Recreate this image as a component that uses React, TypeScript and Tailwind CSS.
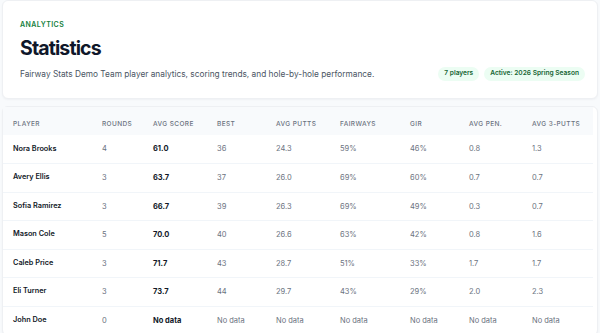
import React from "react";

type Row = {
  name: string;
  rounds: string;
  avg: string;
  best: string;
  putts: string;
  fw: string;
  gir: string;
  pen: string;
  three: string;
};

const rows: Row[] = [
  { name: "Nora Brooks", rounds: "4", avg: "61.0", best: "36", putts: "24.3", fw: "59%", gir: "46%", pen: "0.8", three: "1.3" },
  { name: "Avery Ellis", rounds: "3", avg: "63.7", best: "37", putts: "26.0", fw: "69%", gir: "60%", pen: "0.7", three: "0.7" },
  { name: "Sofia Ramirez", rounds: "3", avg: "66.7", best: "39", putts: "26.3", fw: "69%", gir: "49%", pen: "0.3", three: "0.7" },
  { name: "Mason Cole", rounds: "5", avg: "70.0", best: "40", putts: "26.6", fw: "63%", gir: "42%", pen: "0.8", three: "1.6" },
  { name: "Caleb Price", rounds: "3", avg: "71.7", best: "43", putts: "28.7", fw: "51%", gir: "33%", pen: "1.7", three: "1.7" },
  { name: "Eli Turner", rounds: "3", avg: "73.7", best: "44", putts: "29.7", fw: "43%", gir: "29%", pen: "2.0", three: "2.3" },
  { name: "John Doe", rounds: "0", avg: "No data", best: "No data", putts: "No data", fw: "No data", gir: "No data", pen: "No data", three: "No data" },
];

const headers = ["Player", "Rounds", "Avg Score", "Best", "Avg Putts", "Fairways", "GIR", "Avg Pen.", "Avg 3-Putts"];
const widths = ["w-[89px]", "w-[51px]", "w-[64px]", "w-[59px]", "w-[64px]", "w-[70px]", "w-[59px]", "w-[63px]", "w-[71px]"];

export default function App() {
  return (
    <div className="min-h-screen bg-[#f8fafc] px-[2px] font-['Inter',sans-serif]">
      <div className="rounded-[6px] border border-[#eef0f3] bg-white px-[17px] pt-[18px] pb-[17px] shadow-[0_1px_2px_rgba(15,23,42,0.04)]">
        <div className="text-[7px] font-semibold uppercase leading-[12px] tracking-[0.06em] text-[#15803d]">Analytics</div>
        <h1 className="mt-[3px] text-[19.5px] font-bold leading-[28px] tracking-[-0.045em] text-[#0f172a]">Statistics</h1>
        <div className="mt-[5px] flex items-center justify-between">
          <p className="text-[8.3px] leading-[14px] text-[#4b5563]">
            Fairway Stats Demo Team player analytics, scoring trends, and hole-by-hole performance.
          </p>
          <div className="mr-[-5px] flex items-center gap-[5px]">
            <span className="flex h-[14px] items-center rounded-full bg-[#ecfdf3] px-[6px] text-[6.6px] font-semibold text-[#166534]">7 players</span>
            <span className="flex h-[14px] items-center rounded-full bg-[#ecfdf3] px-[6px] text-[6.6px] font-semibold text-[#166534]">Active: 2026 Spring Season</span>
          </div>
        </div>
      </div>

      <div className="mt-[7px] rounded-[6px] border border-[#eef0f3] bg-white shadow-[0_1px_2px_rgba(15,23,42,0.04)]">
        <table className="border-collapse text-left">
          <thead>
            <tr className="bg-[#f8fafc]">
              {headers.map((h, i) => (
                <th
                  key={h}
                  className={`${widths[i]} whitespace-nowrap px-[10px] pt-[13px] pb-[6px] text-[6.5px] font-medium uppercase leading-[9px] tracking-[0.06em] text-[#6b7280]`}
                >
                  {h}
                </th>
              ))}
            </tr>
          </thead>
          <tbody>
            {rows.map((r, idx) => {
              const cells = [r.rounds, r.avg, r.best, r.putts, r.fw, r.gir, r.pen, r.three];
              return (
                <tr key={r.name} className={idx < rows.length - 1 ? "border-b border-[#f1f5f9]" : ""}>
                  <td className="h-[28.5px] whitespace-nowrap px-[10px] text-[7.3px] font-semibold text-[#111827]">{r.name}</td>
                  {cells.map((c, ci) => (
                    <td
                      key={ci}
                      className={
                        ci === 1
                          ? "whitespace-nowrap px-[10px] text-[7.5px] font-bold text-[#111827]"
                          : "whitespace-nowrap px-[10px] text-[7.5px] text-[#6b7280]"
                      }
                    >
                      {c}
                    </td>
                  ))}
                </tr>
              );
            })}
          </tbody>
        </table>
      </div>
    </div>
  );
}
